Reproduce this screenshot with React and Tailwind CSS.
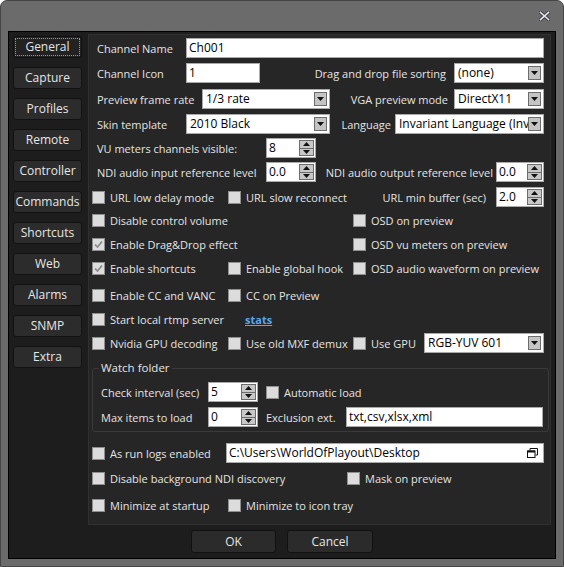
import React from 'react';

const Tri = ({ up }) => (
  <svg width="7" height="4" viewBox="0 0 7 4">
    <path d={up ? 'M0 4h7L3.5 0z' : 'M0 0h7L3.5 4z'} fill="#111" />
  </svg>
);

const Check = ({ checked }) => (
  <span className="w-[13px] h-[13px] shrink-0 border border-[#8f8f8f] bg-[#dcdcdc] flex items-center justify-center">
    {checked && (
      <svg width="11" height="11" viewBox="0 0 11 11">
        <path d="M2 5.5 L4.5 8 L9 2.5" fill="none" stroke="#8a8a8a" strokeWidth="1.7" />
      </svg>
    )}
  </span>
);

const CheckItem = ({ label, checked }) => (
  <div className="flex items-center gap-[5px] whitespace-nowrap">
    <Check checked={checked} />
    <span>{label}</span>
  </div>
);

const Spin = ({ value, className }) => (
  <div className={'h-[20px] shrink-0 bg-white border border-[#a9a9a9] flex items-center ' + className}>
    <span className="flex-1 pl-[2px] text-black text-[12px] leading-[18px]">{value}</span>
    <div className="w-[15px] h-[16px] mr-[1px] flex flex-col border border-[#6c6c6c] bg-[#c8c8c8]">
      <div className="flex-1 flex items-center justify-center border-b border-[#6c6c6c]">
        <Tri up />
      </div>
      <div className="flex-1 flex items-center justify-center">
        <Tri />
      </div>
    </div>
  </div>
);

const Select = ({ value, className }) => (
  <div className={'h-[20px] shrink-0 bg-white border border-[#a9a9a9] flex items-center ' + className}>
    <span className="flex-1 min-w-0 pl-[3px] text-black text-[12px] leading-[18px] whitespace-nowrap overflow-hidden">{value}</span>
    <div className="w-[13px] h-[14px] mr-[2px] shrink-0 border border-[#6c6c6c] bg-[#c4c4c4] flex items-center justify-center">
      <Tri />
    </div>
  </div>
);

const Input = ({ value, className, children }) => (
  <div className={'h-[20px] bg-white border border-[#a9a9a9] flex items-center ' + className}>
    <span className="flex-1 min-w-0 pl-[2px] text-black text-[12px] leading-[18px] whitespace-nowrap overflow-hidden">{value}</span>
    {children}
  </div>
);

const tabs = ['General', 'Capture', 'Profiles', 'Remote', 'Controller', 'Commands', 'Shortcuts', 'Web', 'Alarms', 'SNMP', 'Extra'];

export default function App() {
  return (
    <div className="w-[564px] h-[567px] bg-[#6b6b6b] border border-[#454545] rounded-t-[7px] flex flex-col font-['Open_Sans',sans-serif] text-[11px] text-[#e4e4e4] leading-none">
      {/* Title bar */}
      <div className="h-[30px] shrink-0 flex justify-end items-start pt-[10px] pr-[13px]">
        <svg width="11" height="10" viewBox="0 0 11 10">
          <path d="M1.5 1.5 L9.5 8.5 M9.5 1.5 L1.5 8.5" stroke="#3c3c46" strokeWidth="3.6" strokeLinecap="square" />
          <path d="M1.5 1.5 L9.5 8.5 M9.5 1.5 L1.5 8.5" stroke="#e6e6ea" strokeWidth="1.6" strokeLinecap="square" />
        </svg>
      </div>

      {/* Client area */}
      <div className="flex-1 mx-[7px] mb-[7px] border border-black bg-[#1d1d1d] flex flex-col">
        <div className="flex mt-[2px] h-[491px]">
          {/* Sidebar */}
          <div className="w-[79px] shrink-0 pl-[4px] pt-[2px] flex flex-col gap-[9px]">
            {tabs.map((t, i) =>
              i === 0 ? (
                <div key={t} className="w-[69px] h-[22px] rounded-[3px] bg-[#222222] border border-[#101010] flex items-center justify-center text-[12px] text-[#e6e6e6] outline-1 outline-dotted outline-[#9a9a9a] -outline-offset-[3px]">
                  {t}
                </div>
              ) : (
                <div key={t} className="w-[69px] h-[22px] rounded-[3px] bg-[#2c2c2c] border border-[#121212] flex items-center justify-center text-[12px] text-[#e6e6e6]">
                  {t}
                </div>
              )
            )}
          </div>

          {/* Panel */}
          <div className="w-[463px] border border-[#303030] bg-[#262626] pl-[3px] pr-[6px] pt-[3px] flex flex-col">
            <div className="h-[20px] flex items-center">
              <span className="w-[94px] pl-[5px] whitespace-nowrap">Channel Name</span>
              <Input value="Ch001" className="flex-1" />
            </div>

            <div className="h-[20px] mt-[5px] flex items-center">
              <span className="w-[94px] pl-[5px] whitespace-nowrap">Channel Icon</span>
              <Input value="1" className="w-[74px]" />
              <span className="flex-1 text-right pr-[8px] whitespace-nowrap">Drag and drop file sorting</span>
              <Select value="(none)" className="w-[90px]" />
            </div>

            <div className="h-[20px] mt-[6px] flex items-center">
              <span className="w-[110px] pl-[5px] whitespace-nowrap">Preview frame rate</span>
              <Select value="1/3 rate" className="w-[128px]" />
              <span className="flex-1 text-right pr-[6px] whitespace-nowrap">VGA preview mode</span>
              <Select value="DirectX11" className="w-[90px]" />
            </div>

            <div className="h-[20px] mt-[5px] flex items-center">
              <span className="w-[94px] pl-[5px] whitespace-nowrap">Skin template</span>
              <Select value="2010 Black" className="w-[144px]" />
              <span className="flex-1 text-right pr-[4px] whitespace-nowrap">Language</span>
              <Select value="Invariant Language (Invariant Country)" className="w-[149px]" />
            </div>

            <div className="h-[20px] mt-[4px] flex items-center">
              <span className="w-[174px] pl-[5px] whitespace-nowrap">VU meters channels visible:</span>
              <Spin value="8" className="w-[50px]" />
            </div>

            <div className="h-[20px] mt-[4px] flex items-center">
              <span className="w-[174px] pl-[5px] whitespace-nowrap">NDI audio input reference level</span>
              <Spin value="0.0" className="w-[50px]" />
              <span className="flex-1 text-right pr-[3px] whitespace-nowrap">NDI audio output reference level</span>
              <Spin value="0.0" className="w-[48px]" />
            </div>

            <div className="h-[20px] mt-[5px] flex items-center">
              <div className="w-[136px]">
                <CheckItem label="URL low delay mode" />
              </div>
              <CheckItem label="URL slow reconnect" />
              <span className="flex-1 text-right pr-[10px] whitespace-nowrap">URL min buffer (sec)</span>
              <Spin value="2.0" className="w-[48px]" />
            </div>

            <div className="h-[20px] mt-[3px] flex items-center">
              <div className="w-[261px]">
                <CheckItem label="Disable control volume" />
              </div>
              <CheckItem label="OSD on preview" />
            </div>

            <div className="h-[20px] mt-[4px] flex items-center">
              <div className="w-[261px]">
                <CheckItem label="Enable Drag&Drop effect" checked />
              </div>
              <CheckItem label="OSD vu meters on preview" />
            </div>

            <div className="h-[20px] mt-[4px] flex items-center">
              <div className="w-[136px]">
                <CheckItem label="Enable shortcuts" checked />
              </div>
              <div className="w-[125px]">
                <CheckItem label="Enable global hook" />
              </div>
              <CheckItem label="OSD audio waveform on preview" />
            </div>

            <div className="h-[20px] mt-[7px] flex items-center">
              <div className="w-[136px]">
                <CheckItem label="Enable CC and VANC" />
              </div>
              <CheckItem label="CC on Preview" />
            </div>

            <div className="h-[20px] mt-[4px] flex items-center">
              <div className="w-[153px]">
                <CheckItem label="Start local rtmp server" />
              </div>
              <span className="font-bold underline text-[#5aa6ee]">stats</span>
            </div>

            <div className="h-[20px] mt-[4px] flex items-center">
              <div className="w-[136px]">
                <CheckItem label="Nvidia GPU decoding" />
              </div>
              <div className="w-[125px]">
                <CheckItem label="Use old MXF demux" />
              </div>
              <CheckItem label="Use GPU" />
              <Select value="RGB-YUV 601" className="w-[120px] ml-auto" />
            </div>

            <fieldset className="mt-[7px] mr-[-5px] border border-[#3a3a3a] rounded-[3px] pl-[8px] pr-[5px] pb-[4px]">
              <legend className="px-[2px] -ml-[2px] leading-[16px] text-[11.5px]">Watch folder</legend>
              <div className="h-[20px] mt-[6px] flex items-center">
                <span className="w-[107px] whitespace-nowrap">Check interval (sec)</span>
                <Spin value="5" className="w-[50px]" />
                <div className="ml-[8px]">
                  <CheckItem label="Automatic load" />
                </div>
              </div>
              <div className="h-[20px] mt-[5px] flex items-center">
                <span className="w-[107px] whitespace-nowrap">Max items to load</span>
                <Spin value="0" className="w-[50px]" />
                <span className="ml-[8px] w-[80px] whitespace-nowrap">Exclusion ext.</span>
                <Input value="txt,csv,xlsx,xml" className="flex-1" />
              </div>
            </fieldset>

            <div className="h-[20px] mt-[11px] flex items-center">
              <div className="w-[134px]">
                <CheckItem label="As run logs enabled" />
              </div>
              <Input value="C:\Users\WorldOfPlayout\Desktop" className="flex-1">
                <svg width="11" height="10" viewBox="0 0 11 10" className="mr-[5px] shrink-0">
                  <path d="M3 2.5V0.5H10.5V7H8.5" fill="none" stroke="#111" strokeWidth="1" />
                  <rect x="0.5" y="3" width="7.5" height="6.5" fill="none" stroke="#111" strokeWidth="1" />
                  <path d="M0.5 3.5H8" stroke="#111" strokeWidth="2" />
                </svg>
              </Input>
            </div>

            <div className="h-[20px] mt-[5px] flex items-center">
              <div className="w-[255px]">
                <CheckItem label="Disable background NDI discovery" />
              </div>
              <CheckItem label="Mask on preview" />
            </div>

            <div className="h-[20px] mt-[7px] flex items-center">
              <div className="w-[136px]">
                <CheckItem label="Minimize at startup" />
              </div>
              <CheckItem label="Minimize to icon tray" />
            </div>
          </div>
        </div>

        {/* Footer */}
        <div className="flex justify-center gap-[11px] mt-[5px]">
          <div className="w-[85px] h-[23px] rounded-[3px] bg-[#2b2b2b] border border-[#111111] flex items-center justify-center text-[12px] text-[#e6e6e6]">
            OK
          </div>
          <div className="w-[86px] h-[23px] rounded-[3px] bg-[#2b2b2b] border border-[#111111] flex items-center justify-center text-[12px] text-[#e6e6e6]">
            Cancel
          </div>
        </div>
      </div>
    </div>
  );
}
